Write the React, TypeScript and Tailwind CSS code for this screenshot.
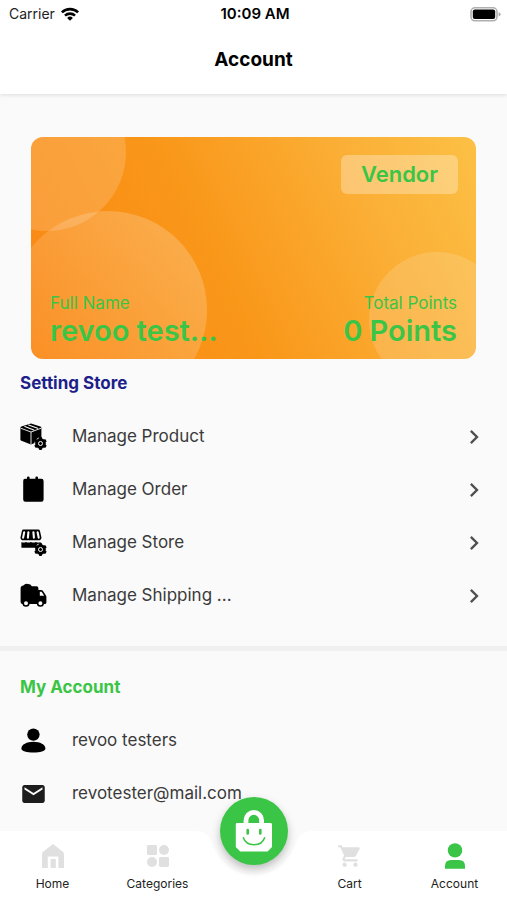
import type { ReactNode } from 'react';
import { MdChevronRight, MdEmail, MdShoppingCart } from 'react-icons/md';

/**************************************************
    TYPES & INTERFACES
***************************************************/
interface RowProps {
    icon: ReactNode;
    label: string;
    chevron?: boolean;
}

interface TabProps {
    icon: ReactNode;
    label: string;
}

/**************************************************
    ICONS
***************************************************/
function Gear() {
    return (
        <g transform="translate(20.5 20.5)">
            <g fill="#000" stroke="#fafafa" strokeWidth="1">
                <circle r="5.6" />
            </g>
            <g fill="#000">
                <circle r="5" />
                <rect x="-1.6" y="-6.4" width="3.2" height="12.8" rx="0.8" />
                <rect x="-1.6" y="-6.4" width="3.2" height="12.8" rx="0.8" transform="rotate(60)" />
                <rect x="-1.6" y="-6.4" width="3.2" height="12.8" rx="0.8" transform="rotate(120)" />
            </g>
            <circle r="2" fill="none" stroke="#fafafa" strokeWidth="1" />
        </g>
    );
}

function ProductIcon() {
    return (
        <svg viewBox="0 0 27 27" className="size-[27px]" aria-hidden="true">
            <path d="M11 0.4 20.4 3.6Q21.4 4 21.4 5V16.4Q21.4 17.4 20.4 17.8L11 21.4 1.4 17.8Q0.4 17.4 0.4 16.4V5Q0.4 4 1.4 3.6Z" />
            <path d="M0.6 5.2 11 9 21.2 5.2M11 9V21.4" fill="none" stroke="#fafafa" strokeWidth="0.9" />
            <path d="M4.8 3.6 13.8 6.9M8.6 2 17.6 5.3" fill="none" stroke="#fafafa" strokeWidth="1.1" strokeLinecap="round" />
            <Gear />
        </svg>
    );
}

function OrderIcon() {
    return (
        <svg viewBox="0 0 27 27" className="size-[27px]" aria-hidden="true">
            <path d="M5 2.8H7V1.4Q7 0.4 8.3 0.4T9.6 1.4V2.8H15.4V1.4Q15.4 0.4 16.7 0.4T18 1.4V2.8H21.4Q23.6 2.8 23.6 5V23.6Q23.6 25.8 21.4 25.8H5.4Q3.2 25.8 3.2 23.6V5Q3.2 2.8 5 2.8Z" />
        </svg>
    );
}

function StoreIcon() {
    return (
        <svg viewBox="0 0 27 27" className="size-[27px]" aria-hidden="true">
            <path d="M3.6 0.6H18.2Q19.6 0.6 20 1.9L21.4 8.4Q21.4 11.2 18.6 11.2H3.4Q0.5 11.2 0.5 8.4L1.9 1.9Q2.3 0.6 3.6 0.6Z" />
            <path d="M4.2 3.2 3.1 8.6M8.4 3.2 7.9 8.6M13.4 3.2 13.9 8.6M17.6 3.2 18.7 8.6" stroke="#fafafa" strokeWidth="2.1" strokeLinecap="round" />
            <path d="M1.4 13Q3.4 14.2 6 13 8.4 14.2 10.9 13 13.4 14.2 15.9 13 18.4 14.2 20.6 13V18.8H1.4Z" />
            <Gear />
        </svg>
    );
}

function ShippingIcon() {
    return (
        <svg viewBox="0 0 27 27" className="size-[27px]" aria-hidden="true">
            <path d="M0.6 6.6Q0.6 3.6 3.4 3.4 5.4 1 8 2 10.8 2 11.8 4.2H16.4Q18.4 4.2 18.4 6.2V8H21Q22.4 8 23.2 9.2L25.8 13.2Q26.4 14 26.4 15V20.4Q26.4 22 24.8 22H2.6Q0.6 22 0.6 20Z" />
            <path d="M19.8 9.8H21.6L24.2 13.8H19.8Z" fill="#fafafa" />
            <g stroke="#000" strokeWidth="1.6" fill="#fafafa">
                <circle cx="6" cy="21.2" r="2.8" />
                <circle cx="20.4" cy="21.2" r="2.8" />
            </g>
        </svg>
    );
}

function UserIcon() {
    return (
        <svg viewBox="0 0 27 27" className="size-[27px]" aria-hidden="true">
            <circle cx="13.4" cy="7.6" r="6.2" />
            <path d="M13.4 14.8C20 14.8 25.4 17.6 25.4 21.4C25.4 24.2 20 25.4 13.4 25.4S1.4 24.2 1.4 21.4C1.4 17.6 6.8 14.8 13.4 14.8Z" />
        </svg>
    );
}

function HomeIcon() {
    return (
        <svg viewBox="0 0 24 26" className="h-[26px] w-6" fill="#e0e0e0" aria-hidden="true">
            <path d="M12 1 21.6 8.6Q23 9.8 23 11.4V25H17.4V13.6H6.8V25H1V11.4Q1 9.8 2.4 8.6Z" />
            <rect x="9.6" y="16" width="5.2" height="9" />
        </svg>
    );
}

function CategoriesIcon() {
    return (
        <svg viewBox="0 0 24 26" className="h-[26px] w-6" fill="#e0e0e0" aria-hidden="true">
            <rect x="1" y="2" width="10" height="10" rx="1.4" />
            <circle cx="18" cy="7" r="5" />
            <circle cx="6" cy="19" r="5" />
            <rect x="13" y="14" width="10" height="10" rx="1.4" />
        </svg>
    );
}

function AccountIcon() {
    return (
        <svg viewBox="0 0 24 26" className="h-[26px] w-6" fill="#3ac546" aria-hidden="true">
            <circle cx="12" cy="7.4" r="7.2" />
            <path d="M2 25.8V23Q2 17 8 17H16Q22 17 22 23V25.8Z" />
        </svg>
    );
}

function BagIcon() {
    return (
        <svg viewBox="0 0 38 42" className="h-[42px] w-[38px]" fill="none" aria-hidden="true">
            <path d="M11 15V10.2A7.8 7.8 0 0 1 26.6 10.2V15" stroke="#fff" strokeWidth="4.8" />
            <path d="M2.2 13H35.6Q37 13 37 14.4V37L32.6 41.4H5.2L0.8 37V14.4Q0.8 13 2.2 13Z" fill="#fff" />
            <rect x="11.4" y="18.8" width="2.6" height="6" rx="1.2" fill="#3ac546" />
            <rect x="24" y="18.8" width="2.6" height="6" rx="1.2" fill="#3ac546" />
            <path d="M8.4 27.8C11.4 37 26.6 37 29.6 27.8" stroke="#3ac546" strokeWidth="1.5" strokeLinecap="round" />
        </svg>
    );
}

/**************************************************
    COMPONENT CODE
***************************************************/
function StatusBar() {
    return (
        <div className="grid h-7 grid-cols-3 items-center pl-[9px] pr-[6px] text-sm text-[#222]">
            <div className="flex items-center gap-[6px]">
                <span>Carrier</span>
                <svg viewBox="0 0 18 14" className="h-[14px] w-[18px]" aria-hidden="true">
                    <g fill="none" stroke="#000" strokeWidth="2.6">
                        <path d="M0.9 5.4A11.6 11.6 0 0 1 17.1 5.4" />
                        <path d="M4 8.6A7.2 7.2 0 0 1 14 8.6" />
                    </g>
                    <path d="M9 13.8 6.1 10.9A4.2 4.2 0 0 1 11.9 10.9Z" />
                </svg>
            </div>
            <span className="text-center text-[15px] font-semibold text-black">10:09 AM</span>
            <svg viewBox="0 0 31 15" className="h-[15px] w-[31px] justify-self-end" aria-hidden="true">
                <rect x="1" y="0.8" width="26" height="13" rx="4" fill="#fff" stroke="#b0b0b0" strokeWidth="1.6" />
                <rect x="2.8" y="2.6" width="22.4" height="9.4" rx="2" />
                <path d="M28.6 5.2Q30.6 5.8 30.6 7.3T28.6 9.4Z" fill="#aaa" />
            </svg>
        </div>
    );
}

function VendorCard() {
    return (
        <section className="relative mx-[31px] mt-[43px] flex h-[222px] flex-col justify-between overflow-hidden rounded-xl bg-linear-[64deg,#fa8714_0%,#f99719_42%,#fbad34_72%,#fcc045_100%] text-[#3ac546]">
            <svg className="absolute bottom-0 left-0 h-[222px] w-[180px]" viewBox="0 0 180 222" aria-hidden="true">
                <defs>
                    <linearGradient id="bubble" x1="0" y1="1" x2="1" y2="0">
                        <stop offset="0.2" stopColor="#fff" stopOpacity="0.08" />
                        <stop offset="1" stopColor="#fff" stopOpacity="0.24" />
                    </linearGradient>
                </defs>
                <circle cx="16" cy="15" r="79" fill="#fff" fillOpacity="0.16" />
                <circle cx="77" cy="173" r="99" fill="url(#bubble)" />
            </svg>
            <svg className="absolute bottom-0 right-0 h-[108px] w-[108px]" viewBox="0 0 108 108" fill="#fff" fillOpacity="0.15" aria-hidden="true">
                <circle cx="69" cy="69" r="68" />
            </svg>
            <span className="relative mr-[18px] mt-[18px] self-end rounded-md bg-white/30 px-5 py-1 text-[22px] font-semibold leading-[31px]">
                Vendor
            </span>
            <div className="relative flex justify-between px-[19px] pb-3">
                <div>
                    <p className="text-[17px] leading-6">Full Name</p>
                    <p className="text-[29px] font-semibold leading-8">revoo test...</p>
                </div>
                <div className="text-right">
                    <p className="text-[17px] leading-6">Total Points</p>
                    <p className="text-[29px] font-semibold leading-8">0 Points</p>
                </div>
            </div>
        </section>
    );
}

function Row({ icon, label, chevron }: RowProps) {
    return (
        <li>
            <button type="button" className="flex h-[53px] w-full items-center gap-[25px] pl-5 pr-[19px] text-left text-[17px] text-[#3a3a3a]">
                <span className="flex w-[27px] justify-center text-black">{icon}</span>
                <span className="flex-1">{label}</span>
                {chevron && <MdChevronRight size={28} color="#505050" />}
            </button>
        </li>
    );
}

function Tab({ icon, label }: TabProps) {
    return (
        <a href="#" className="flex flex-1 flex-col items-center gap-[3px] pt-3 text-xs leading-6 text-[#222]">
            {icon}
            {label}
        </a>
    );
}

function BottomNav() {
    return (
        <nav className="sticky bottom-0 mt-auto flex h-[69px]">
            {/* bar with a notch under the round button */}
            <div className="absolute inset-0 flex">
                <div className="flex-1 bg-white" />
                <svg viewBox="0 0 130 69" className="h-[69px] w-[130px]" fill="#fff" aria-hidden="true">
                    <path d="M0 0H6C16 0 20 4 23 12C31 32 44 44 65 44C86 44 99 32 107 12C110 4 114 0 124 0H130V69H0Z" />
                </svg>
                <div className="flex-1 bg-white" />
            </div>
            <div className="relative flex w-full">
                <Tab icon={<HomeIcon />} label="Home" />
                <Tab icon={<CategoriesIcon />} label="Categories" />
                <div className="flex w-[87px] justify-center">
                    <button
                        type="button"
                        aria-label="Shop"
                        className="-mt-[34px] flex size-[68px] items-center justify-center rounded-full bg-[#3ac546] shadow-[0_4px_8px_rgba(0,0,0,0.25)]"
                    >
                        <BagIcon />
                    </button>
                </div>
                <Tab icon={<MdShoppingCart size={26} color="#e0e0e0" />} label="Cart" />
                <Tab icon={<AccountIcon />} label="Account" />
            </div>
        </nav>
    );
}

/**************************************************
    RENDER COMPONENT
***************************************************/
export default function App() {
    return (
        <div className="flex min-h-screen flex-col bg-[#fafafa] font-['Inter',sans-serif]">
            <header className="h-[94px] bg-white shadow-[0_1px_4px_rgba(0,0,0,0.12)]">
                <StatusBar />
                <h1 className="pt-[18px] text-center text-[19px] font-bold leading-7">Account</h1>
            </header>
            <main>
                <VendorCard />
                <h2 className="mt-3 px-5 text-[17px] font-bold leading-6 text-[#1d1f8a]">Setting Store</h2>
                <ul className="mt-[15px]">
                    <Row icon={<ProductIcon />} label="Manage Product" chevron />
                    <Row icon={<OrderIcon />} label="Manage Order" chevron />
                    <Row icon={<StoreIcon />} label="Manage Store" chevron />
                    <Row icon={<ShippingIcon />} label="Manage Shipping ..." chevron />
                </ul>
                <hr className="mt-6 h-[5px] border-0 bg-[#f0f0f0]" />
                <h2 className="mt-6 px-5 text-[17px] font-bold leading-6 text-[#3ac546]">My Account</h2>
                <ul className="mt-[15px]">
                    <Row icon={<UserIcon />} label="revoo testers" />
                    <Row icon={<MdEmail size={28} color="#1c1c1c" />} label="revotester@mail.com" />
                </ul>
            </main>
            <BottomNav />
        </div>
    );
}
